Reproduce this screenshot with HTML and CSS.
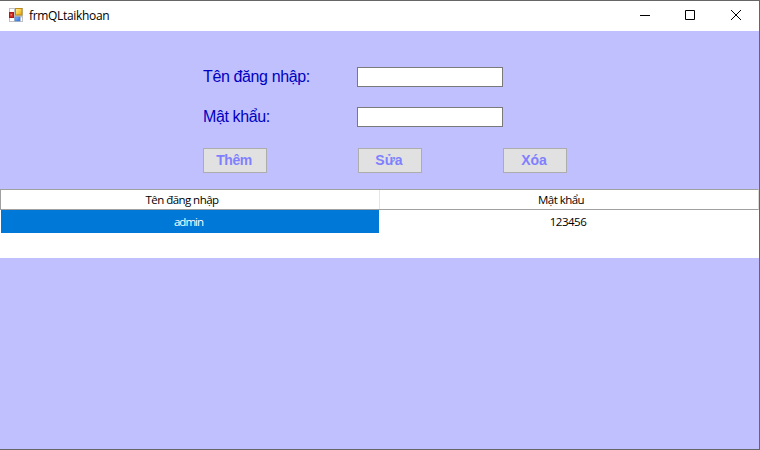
FILE: index.html
```html
<!DOCTYPE html>
<html lang="vi">
<head>
<meta charset="utf-8">
<title>frmQLtaikhoan</title>
<link rel="stylesheet" href="styles.css">
</head>
<body>
<div class="window">
  <header class="titlebar">
    <svg class="app-icon" width="14" height="14" viewBox="0 0 14 14">
      <defs>
        <linearGradient id="gold" x1="0" y1="0" x2="1" y2="1"><stop offset="0" stop-color="#fff0a8"/><stop offset=".5" stop-color="#f8cd42"/><stop offset="1" stop-color="#e0a010"/></linearGradient>
        <linearGradient id="blue" x1="0" y1="0" x2="1" y2="1"><stop offset="0" stop-color="#8fbcff"/><stop offset="1" stop-color="#286ce0"/></linearGradient>
      </defs>
      <rect width="14" height="14" fill="#bfc1c4"/>
      <path d="M1 1h4v3H1zM1 10h4v3H1zM11.5 9.500h1.500V13h-1.500z" fill="#fff"/>
      <rect x=".5" y="4.500" width="4" height="5" fill="#cf2b20" stroke="#a51c18"/>
      <rect x="1.500" y="6" width="1.500" height="1.500" fill="#f08070"/>
      <rect x="6.500" y=".5" width="6.500" height="6.500" fill="url(#gold)" stroke="#bd8a17"/>
      <rect x="6" y="9" width="5" height="4" fill="url(#blue)" stroke="#487fd0" stroke-width=".6"/>
    </svg>
    <span class="title">frmQLtaikhoan</span>
    <nav class="caption">
      <svg width="10" height="10" viewBox="0 0 10 10"><path d="M0 5.500h10"/></svg>
      <svg width="10" height="10" viewBox="0 0 10 10"><path d="M.5.5h9v9h-9z"/></svg>
      <svg width="10" height="10" viewBox="0 0 10 10"><path d="M0 0l10 10M10 0L0 10"/></svg>
    </nav>
  </header>
  <main>
    <form class="form">
      <label class="label" for="user">Tên đăng nhập:</label>
      <input class="field" id="user" type="text">
      <label class="label" for="pass">Mật khẩu:</label>
      <input class="field" id="pass" type="text">
    </form>
    <div class="actions">
      <button class="btn btn-add" type="button">Thêm</button>
      <button class="btn" type="button">Sửa</button>
      <button class="btn" type="button">Xóa</button>
    </div>
    <section class="grid">
      <div class="grid-head">
        <div class="cell head-user">Tên đăng nhập</div>
        <div class="cell head-pass">Mật khẩu</div>
      </div>
      <div class="grid-row">
        <div class="cell selected">admin</div>
        <div class="cell value">123456</div>
      </div>
    </section>
  </main>
</div>
</body>
</html>
```
FILE: styles.css
```css
* { box-sizing: border-box; }
body { margin: 0; }
.window {
  width: 760px;
  height: 450px;
  border: solid #666;
  border-width: 1px 1px 1px 0;
  background: #c0c0ff;
  overflow: hidden;
}
.titlebar {
  display: flex;
  align-items: center;
  height: 30px;
  padding: 0 18px 0 9px;
  background: #fff;
}
.app-icon { margin-top: -2px; }
.title {
  margin-left: 6px;
  font: 12px/16px "Open Sans", sans-serif;
  letter-spacing: -0.32px;
  color: #000;
}
.caption {
  display: flex;
  gap: 35px;
  margin-left: auto;
}
.caption svg {
  display: block;
  margin-top: -2px;
  fill: none;
  stroke: #000;
  stroke-width: 1;
}
.caption svg:last-child { margin-left: 1px; }
.form {
  display: grid;
  grid-template-columns: 154px 146px;
  grid-auto-rows: 20px;
  row-gap: 20px;
  padding: 36px 0 0 203px;
}
.label {
  font: 16px/19px "Liberation Sans", Arial, sans-serif;
  letter-spacing: -0.38px;
  color: #0000c0;
  white-space: nowrap;
}
.field {
  width: 146px;
  height: 20px;
  padding: 1px 3px;
  border: 1px solid #7a7a7a;
  border-radius: 0;
  background: #fff;
}
.actions {
  display: flex;
  padding: 21px 0 0 203px;
}
.btn {
  width: 64px;
  height: 25px;
  padding: 0 2px 1px 0;
  border: 1px solid #adadad;
  border-radius: 0;
  background: #e1e1e1;
  color: #8080ff;
  font: bold 14px/22px "Liberation Sans", Arial, sans-serif;
}
.btn-add { letter-spacing: -0.4px; }
.btn:nth-child(2) { margin-left: 91px; }
.btn:nth-child(3) { margin-left: 81px; }
.grid {
  height: 69px;
  margin-top: 16px;
  background: #fff;
  font: 11.5px/14px "Open Sans", sans-serif;
  letter-spacing: -0.55px;
  color: #000;
}
.grid-head {
  display: flex;
  height: 21px;
  border: 1px solid #a0a0a0;
  border-right-color: #dcdcdc;
}
.cell {
  display: flex;
  align-items: center;
  justify-content: center;
  width: 378px;
}
.head-user { padding-right: 16px; }
.head-pass {
  flex: 1;
  margin-left: 1px;
  padding-right: 16px;
  box-shadow: -1px 0 #e5e5e5;
}
.grid-row {
  display: flex;
  height: 23px;
  padding-left: 1px;
}
.selected {
  padding-right: 3px;
  background: #0078d7;
  color: #fff;
  letter-spacing: -1px;
}
.value { letter-spacing: -0.5px; }
```
